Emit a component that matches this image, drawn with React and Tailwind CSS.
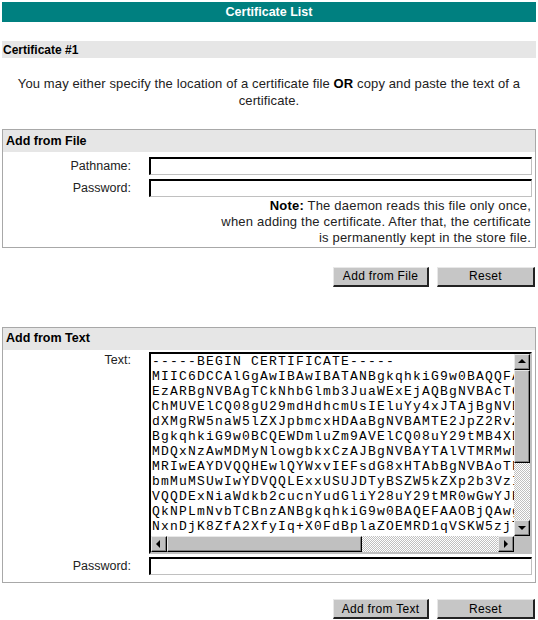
const CERT_LINES = [
  '-----BEGIN CERTIFICATE-----',
  'MIIC6DCCAlGgAwIBAwIBATANBgkqhkiG9w0BAQQFADCB',
  'EzARBgNVBAgTCkNhbGlmb3JuaWExEjAQBgNVBAcTCVBh',
  'ChMUVElCQ08gU29mdHdhcmUsIEluYy4xJTAjBgNVBAsT',
  'dXMgRW5naW5lZXJpbmcxHDAaBgNVBAMTE2JpZ2RvZy5y',
  'BgkqhkiG9w0BCQEWDmluZm9AVElCQ08uY29tMB4XDTA0',
  'MDQxNzAwMDMyNlowgbkxCzAJBgNVBAYTAlVTMRMwEQYD',
  'MRIwEAYDVQQHEwlQYWxvIEFsdG8xHTAbBgNVBAoTFFRJ',
  'bmMuMSUwIwYDVQQLExxUSUJDTyBSZW5kZXp2b3VzIEVu',
  'VQQDExNiaWdkb2cucnYudGliY28uY29tMR0wGwYJKoZI',
  'QkNPLmNvbTCBnzANBgkqhkiG9w0BAQEFAAOBjQAwgYkC',
  'NxnDjK8ZfA2XfyIq+X0FdBplaZOEMRD1qVSKW5zjT1ab',
  'ZW5kZXp2b3VzIEVuZ2luZWVyaW5nMRwwGgYDVQQDExNp',
]

function Input() {
  return (
    <div className="h-[18px] flex-1 bg-white border-t-2 border-l-2 border-b border-r border-t-black border-l-black border-b-[#c0c0c0] border-r-[#c0c0c0]" />
  )
}

function Btn({ children, w }) {
  return (
    <div
      className={`${w} h-[20px] bg-[#c6c6c6] flex items-center justify-center border-t border-l border-t-[#e8e8e8] border-l-[#e8e8e8] border-r-2 border-b-2 border-r-[#222] border-b-[#222] text-[12px] tracking-[0.3px]`}
    >
      {children}
    </div>
  )
}

function ArrowBtn({ dir }) {
  const pts = {
    up: '4,9 8,5 12,9',
    down: '4,6 8,10 12,6',
    left: '9,4 5,8 9,12',
    right: '6,4 10,8 6,12',
  }[dir]
  return (
    <div className="w-[16px] h-[16px] shrink-0 bg-[#c0c0c0] border-t border-l border-t-[#e8e8e8] border-l-[#e8e8e8] border-r border-b border-r-black border-b-black shadow-[inset_-1px_-1px_#808080]">
      <svg width="14" height="14" viewBox="1 1 14 14" className="block">
        <polygon points={pts} fill="#000" />
      </svg>
    </div>
  )
}

const dither = 'bg-[repeating-conic-gradient(#c0c0c0_0_25%,#ffffff_0_50%)] bg-size-[2px_2px]'

function Section({ title, children, className = '' }) {
  return (
    <div className={`border border-[#a8a8a8] ${className}`}>
      <div className="h-[22px] bg-[#e6e6e6] font-bold text-[12.5px] flex items-center pl-[3px]">{title}</div>
      {children}
    </div>
  )
}

function Label({ children }) {
  return <div className="w-[128px] text-right text-[12.5px] text-[#222] shrink-0">{children}</div>
}

export default function App() {
  return (
    <div className="w-[538px] h-[620px] overflow-hidden bg-white text-black text-[12px] font-['Liberation_Sans',Arial,sans-serif] px-[2px] pt-[2px]">
      {/* Title */}
      <div className="h-[20px] bg-[#008080] text-white font-bold text-[12.5px] flex items-center justify-center">
        Certificate List
      </div>

      <div className="mt-[19px] h-[17px] bg-[#e6e6e6] font-bold flex items-center pl-[1px]">Certificate #1</div>

      <p className="mt-[17px] text-center leading-[17px] text-[13px] tracking-[0.12px] text-[#222] px-[12px]">
        You may either specify the location of a certificate file <b className="text-black">OR</b> copy and paste the text of a certificate.
      </p>

      {/* Add from File */}
      <Section title="Add from File" className="mt-[20px]">
        <div className="pt-[5px] pr-[3px] pb-[1px]">
          <div className="flex items-center gap-[18px]">
            <Label>Pathname:</Label>
            <Input />
          </div>
          <div className="flex items-center gap-[18px] mt-[3px]">
            <Label>Password:</Label>
            <Input />
          </div>
          <div className="text-right leading-[16px] pr-[1px] text-[13px] tracking-[0.2px] text-[#222]">
            <b className="text-black">Note:</b> The daemon reads this file only once,
            <br />
            when adding the certificate. After that, the certificate
            <br />
            is permanently kept in the store file.
          </div>
        </div>
      </Section>

      <div className="mt-[19px] flex justify-end gap-[8px] pr-[1px]">
        <Btn w="w-[96px]">Add from File</Btn>
        <Btn w="w-[98px]">Reset</Btn>
      </div>

      {/* Add from Text */}
      <Section title="Add from Text" className="mt-[40px]">
        <div className="pt-[2px] pr-[3px] pb-[7px]">
          <div className="flex items-start gap-[18px]">
            <div className="w-[128px] text-right text-[12.5px] leading-[17px] text-[#222] shrink-0">Text:</div>
            <div className="flex-1 h-[202px] border-2 border-t-black border-l-black border-r-[#c0c0c0] border-b-[#c0c0c0] grid grid-cols-[1fr_16px] grid-rows-[1fr_16px]">
              <div className="overflow-hidden bg-white pl-[1px] font-['Liberation_Mono','Courier_New',monospace] text-[13px] leading-[15px] tracking-[1.2px] whitespace-pre text-black">
                {CERT_LINES.map((l, i) => (
                  <div key={i}>{l}</div>
                ))}
              </div>
              <div className="flex flex-col">
                <ArrowBtn dir="up" />
                <div className="h-[93px] shrink-0 bg-[#c0c0c0] border-t border-l border-t-[#e8e8e8] border-l-[#e8e8e8] border-r border-b border-r-black border-b-black shadow-[inset_-1px_-1px_#808080]" />
                <div className={`flex-1 ${dither}`} />
                <ArrowBtn dir="down" />
              </div>
              <div className="flex">
                <ArrowBtn dir="left" />
                <div className="w-[195px] shrink-0 bg-[#c0c0c0] border-t border-l border-t-[#e8e8e8] border-l-[#e8e8e8] border-r border-b border-r-black border-b-black shadow-[inset_-1px_-1px_#808080]" />
                <div className={`flex-1 ${dither}`} />
                <ArrowBtn dir="right" />
              </div>
              <div className="bg-[#c0c0c0]" />
            </div>
          </div>
          <div className="flex items-center gap-[18px] mt-[3px]">
            <Label>Password:</Label>
            <Input />
          </div>
        </div>
      </Section>

      <div className="mt-[16px] flex justify-end gap-[8px] pr-[1px]">
        <Btn w="w-[96px]">Add from Text</Btn>
        <Btn w="w-[98px]">Reset</Btn>
      </div>
    </div>
  )
}
